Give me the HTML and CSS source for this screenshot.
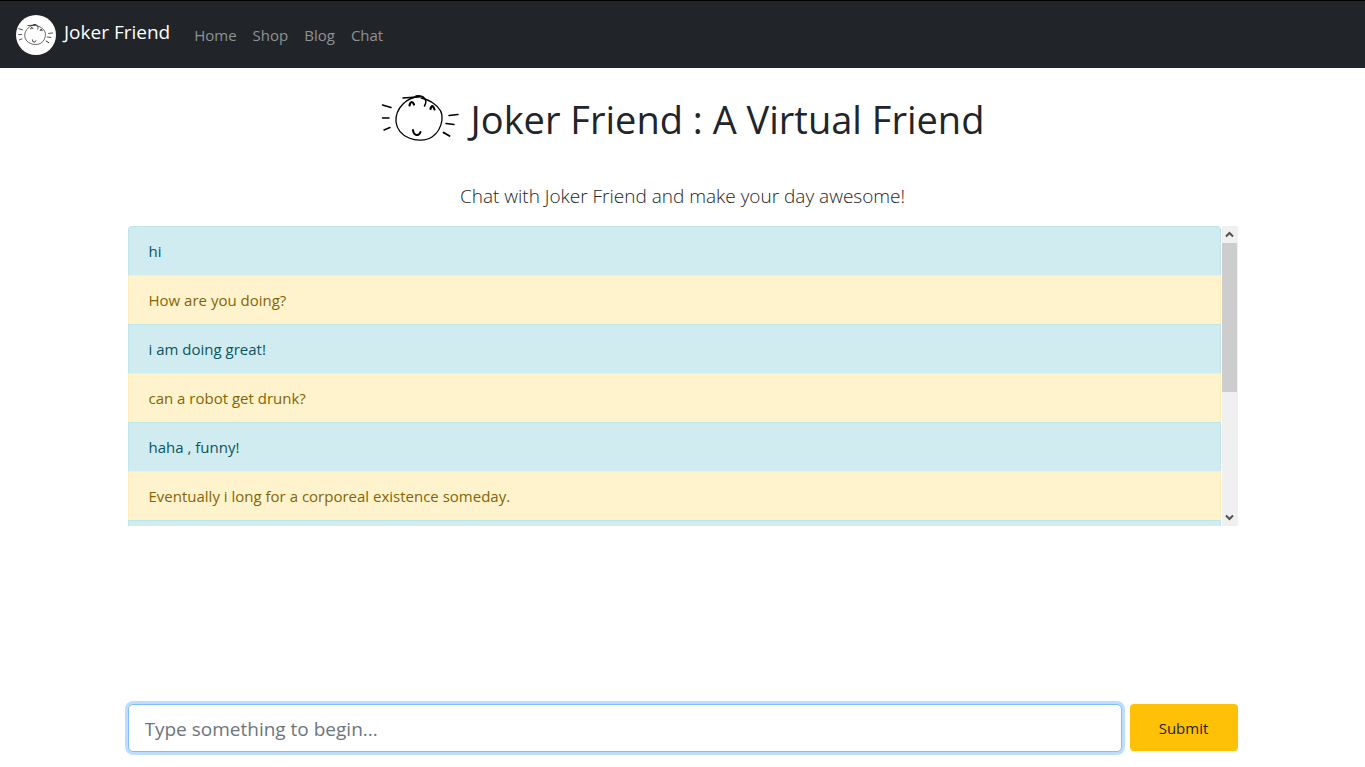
FILE: index.html
```html
<!DOCTYPE html>
<html lang="en">
<head>
<meta charset="utf-8">
<meta name="viewport" content="width=device-width, initial-scale=1">
<title>Joker Friend</title>
<link rel="stylesheet" href="styles.css">
</head>
<body>
<svg width="0" height="0" class="sprite" aria-hidden="true">
  <symbol id="face" viewBox="0 0 80 48">
    <g fill="none" stroke="currentColor" stroke-linecap="round" stroke-linejoin="round">
      <path stroke-width="1.3" d="M38 1.500C31 2 26 5 22 9C17 14 14.500 20 15 27C16 35 21 40 28 43C35 46 45 46 51 42C57 38 60 32 61 25C62 18 58 12 52 8C48 5 44 4 40 3"/>
      <path stroke-width="1.500" d="M22 3L39 1.800"/>
      <path stroke-width="1.500" d="M35 1C43 0 47 5 43.500 11"/>
      <path stroke-width="2.200" d="M28.500 10.500C29.500 6 31.500 6 33 9.500M49.500 14C50.500 10 52 10 53.500 14.500"/>
      <path stroke-width="2" d="M32 35C32.500 41 38 41.500 39.500 37"/>
      <path stroke-width="1.500" d="M1.500 10L10 12.500M1.500 23H8M3 35L9 32.500M68 20.500L77 19.500M65 28.500L73 29.500"/>
      <path stroke-width="1.800" d="M62.500 37.500L68.500 41"/>
    </g>
  </symbol>
</svg>
<header class="navbar">
  <a class="brand" href="#">
    <span class="brand-badge"><svg class="brand-face" aria-hidden="true"><use href="#face"/></svg></span>
    <span class="brand-name">Joker Friend</span>
  </a>
  <nav class="nav">
    <a href="#">Home</a>
    <a href="#">Shop</a>
    <a href="#">Blog</a>
    <a href="#">Chat</a>
  </nav>
</header>
<main class="container">
  <h1 class="title"><svg class="title-face" aria-hidden="true"><use href="#face"/></svg><span>Joker Friend : A Virtual Friend</span></h1>
  <p class="lead">Chat with Joker Friend and make your day awesome!</p>
  <section class="chat" aria-label="Conversation">
    <ul class="messages">
      <li class="message user">hi</li>
      <li class="message bot">How are you doing?</li>
      <li class="message user">i am doing great!</li>
      <li class="message bot">can a robot get drunk?</li>
      <li class="message user">haha , funny!</li>
      <li class="message bot">Eventually i long for a corporeal existence someday.</li>
      <li class="message user"></li>
    </ul>
    <div class="scrollbar">
      <button class="arrow" type="button" aria-label="Scroll up"><svg width="9" height="7" viewBox="0 0 9 7"><path d="M1 5.500L4.500 2L8 5.500"/></svg></button>
      <div class="track"><div class="thumb"></div></div>
      <button class="arrow" type="button" aria-label="Scroll down"><svg width="9" height="7" viewBox="0 0 9 7"><path d="M1 1.500L4.500 5L8 1.500"/></svg></button>
    </div>
  </section>
  <form class="composer">
    <input class="field" type="text" aria-label="Message" placeholder="Type something to begin...">
    <button class="submit" type="button">Submit</button>
  </form>
</main>
</body>
</html>
```
FILE: styles.css
```css
*, *::before, *::after { box-sizing: border-box; }
body {
  margin: 0;
  min-height: 100vh;
  display: flex;
  flex-direction: column;
  background: #fff;
  color: #212529;
  font-family: "Segoe UI", "Open Sans", "Noto Sans", sans-serif;
  font-size: 15px;
  line-height: 24px;
}
.sprite { position: absolute; }
.navbar {
  display: flex;
  align-items: center;
  gap: 16px;
  padding: 14px 16px 13px;
  border-top: 1px solid #000;
  background: #212529;
}
.brand {
  display: flex;
  align-items: flex-start;
  gap: 8px;
  color: #fff;
  font-size: 19px;
  line-height: 34px;
  text-decoration: none;
}
.brand-badge {
  display: flex;
  align-items: center;
  justify-content: center;
  width: 40px;
  height: 40px;
  border-radius: 50%;
  background: #fff;
  color: #000;
}
.brand-face { width: 36px; height: 22px; }
.nav { display: flex; }
.nav a {
  padding: 8px;
  color: #909294;
  text-decoration: none;
}
.container {
  flex: 1;
  display: flex;
  flex-direction: column;
  width: 100%;
  max-width: 1140px;
  margin: 0 auto;
  padding: 24px 15px 15px;
}
.title {
  display: flex;
  justify-content: center;
  align-items: center;
  gap: 10px;
  margin: 0;
  font-size: 38px;
  font-weight: 400;
  line-height: 54px;
}
.title-face { width: 80px; height: 48px; color: #000; }
.lead {
  margin: 34px 0 14px;
  text-align: center;
  font-size: 19px;
  font-weight: 300;
  line-height: 32px;
}
.chat { display: flex; gap: 1px; height: 300px; }
.messages {
  flex: 1;
  margin: 0;
  padding: 0;
  list-style: none;
  overflow: hidden;
}
.message {
  min-height: 49px;
  padding: 12px 20px;
  border: 1px solid;
  border-bottom: 0;
}
.message:first-child { border-radius: 4px 4px 0 0; }
.user { background: #d1ecf1; border-color: #bee5eb; color: #0c5460; }
.bot { background: #fff3cd; border-color: #ffeeba; color: #856404; }
.scrollbar {
  display: flex;
  flex-direction: column;
  width: 16px;
  background: #f0f0f0;
}
.arrow {
  display: flex;
  align-items: center;
  justify-content: center;
  height: 17px;
  padding: 0;
  border: 0;
  background: none;
}
.arrow path { fill: none; stroke: #505050; stroke-width: 2; }
.track { flex: 1; }
.thumb { height: 56%; margin-right: 1px; background: #cdcdcd; }
.composer { display: flex; gap: 8px; margin-top: auto; }
.field {
  flex: 1;
  min-width: 0;
  height: 48px;
  padding: 9px 16px 7px;
  border: 1px solid #80bdff;
  border-radius: 5px;
  outline: 0;
  box-shadow: 0 0 0 3px #bfdeff;
  background: #fff;
  font: inherit;
  font-size: 19px;
}
.field::placeholder { color: #6c757d; opacity: 1; }
.submit {
  width: 108px;
  height: 47px;
  border: 0;
  border-radius: 4px;
  background: #ffc107;
  color: #212529;
  font: inherit;
}
```
